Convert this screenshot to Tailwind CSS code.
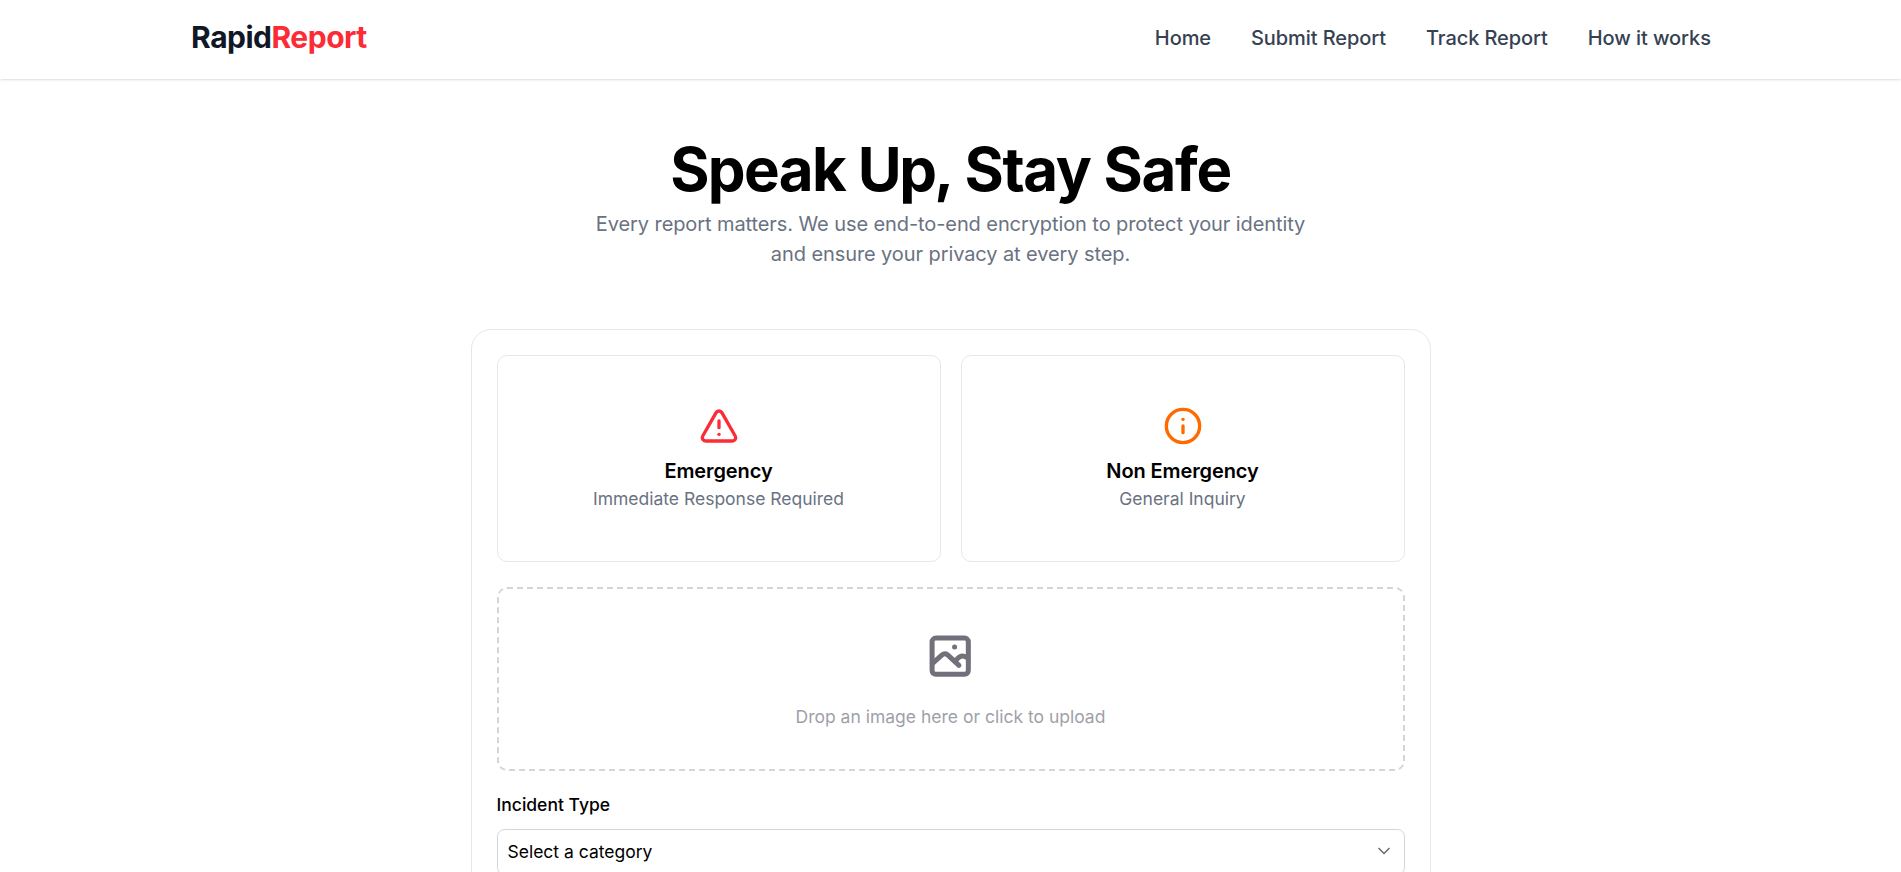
<!DOCTYPE html>
<html lang="en">

<head>
    <meta charset="UTF-8">
    <meta name="viewport" content="width=device-width, initial-scale=1.0">
    <title>Submit Report | RapidReport</title>
    <script src="https://cdn.jsdelivr.net/npm/@tailwindcss/browser@4"></script>
</head>

<body class="bg-white text-black font-[Inter,sans-serif] h-screen overflow-hidden">

    <!-- Navbar -->
    <header class="h-[79px] bg-white shadow-[0_1px_3px_0_rgb(0_0_0/0.1),0_1px_2px_-1px_rgb(0_0_0/0.1)]">
        <nav class="w-4/5 h-[75px] mx-auto flex items-center justify-between">
            <a href="#" class="pl-px pb-[2px] text-[30px] leading-10 font-bold tracking-[-0.5px] text-gray-900">Rapid<span class="text-red-500">Report</span></a>
            <ul class="flex items-center gap-10 text-[20px] leading-[30px] font-medium tracking-[-0.08px] text-gray-700">
                <li><a href="#" class="hover:text-red-500">Home</a></li>
                <li><a href="#" class="hover:text-red-500">Submit Report</a></li>
                <li><a href="#" class="hover:text-red-500">Track Report</a></li>
                <li><a href="#" class="hover:text-red-500">How it works</a></li>
            </ul>
        </nav>
    </header>

    <main>
        <!-- Hero -->
        <section class="pt-[60px] text-center">
            <h1 class="text-[60px] leading-none font-bold tracking-[-1.6px]">Speak <span class="tracking-[-2.6px]">Up,</span> <span class="tracking-[-1.3px]">Stay Safe</span></h1>
            <p class="mt-[10px] mx-auto w-[720px] text-[20px] leading-[30px] tracking-[-0.09px] text-gray-500">Every report matters. We use end-to-end encryption to protect your identity and ensure your privacy at every step.</p>
        </section>

        <!-- Report Form -->
        <form class="mt-[60px] mx-auto w-[960px] border border-gray-200 rounded-[20px] p-[25px]">
            <div class="grid grid-cols-2 gap-5">
                <button type="button" class="h-[207px] flex flex-col items-center justify-center border border-gray-200 rounded-[10px] cursor-pointer">
                    <svg class="w-10 h-10 text-red-500" viewBox="0 0 24 24" fill="none" stroke="currentColor" stroke-width="2" stroke-linecap="round" stroke-linejoin="round">
                        <path d="m21.73 18-8-14a2 2 0 0 0-3.48 0l-8 14A2 2 0 0 0 4 21h16a2 2 0 0 0 1.73-3" />
                        <path d="M12 9v4" />
                        <path d="M12 17h.01" />
                    </svg>
                    <span class="mt-[10px] text-[20px] leading-[30px] font-semibold tracking-[-0.1px]">Emergency</span>
                    <span class="text-[17.5px] leading-[25px] text-gray-500">Immediate Response Required</span>
                </button>
                <button type="button" class="h-[207px] flex flex-col items-center justify-center border border-gray-200 rounded-[10px] cursor-pointer">
                    <svg class="w-10 h-10 text-[#ff6900]" viewBox="0 0 24 24" fill="none" stroke="currentColor" stroke-width="2" stroke-linecap="round" stroke-linejoin="round">
                        <circle cx="12" cy="12" r="10" />
                        <path d="M12 16v-4" />
                        <path d="M12 8h.01" />
                    </svg>
                    <span class="mt-[10px] text-[20px] leading-[30px] font-semibold tracking-[-0.1px]">Non Emergency</span>
                    <span class="text-[17.5px] leading-[25px] text-gray-500">General Inquiry</span>
                </button>
            </div>

            <!-- Image Upload -->
            <label class="mt-[25px] h-[184px] pt-[2px] flex flex-col items-center justify-center border-2 border-dashed border-gray-300 rounded-[10px] cursor-pointer">
                <svg class="w-[50px] h-[50px] mr-px text-zinc-500" viewBox="0 0 24 24" fill="none" stroke="currentColor" stroke-width="2.4" stroke-linecap="round" stroke-linejoin="round">
                    <rect x="3.4" y="3.4" width="17.4" height="17.4" rx="1.8" />
                    <path d="m3.500 15.700 4.700-4.200a2 2 0 0 1 2.800.1l5.300 4.900" />
                    <path d="m14.700 14.200 1-1c1.300-1.600 3.200-1.700 4.900-.1" />
                    <path d="M14.200 7.700h.01" />
                </svg>
                <span class="mt-[23px] text-[17.5px] leading-[25px] text-zinc-400">Drop an image here or click to upload</span>
                <input type="file" accept="image/*" class="hidden">
            </label>

            <!-- Incident Type -->
            <div class="mt-[21px]">
                <label for="incident" class="block text-[17.5px] leading-[25px] font-medium">Incident Type</label>
                <div class="relative mt-[12px]">
                    <select id="incident" class="appearance-none w-full h-[46px] px-[10px] pb-[2px] text-[17.5px] leading-[25px] bg-white border border-gray-300 rounded-[7.5px]">
                        <option>Select a category</option>
                    </select>
                    <svg class="absolute right-[15px] top-[18px] w-3 h-2 text-[#6b6b6b] pointer-events-none" viewBox="0 0 12 8" fill="none" stroke="currentColor" stroke-width="1.5">
                        <path d="m.5 1 5.500 5.500L11.500 1" />
                    </svg>
                </div>
            </div>
        </form>
    </main>

</body>

</html>
